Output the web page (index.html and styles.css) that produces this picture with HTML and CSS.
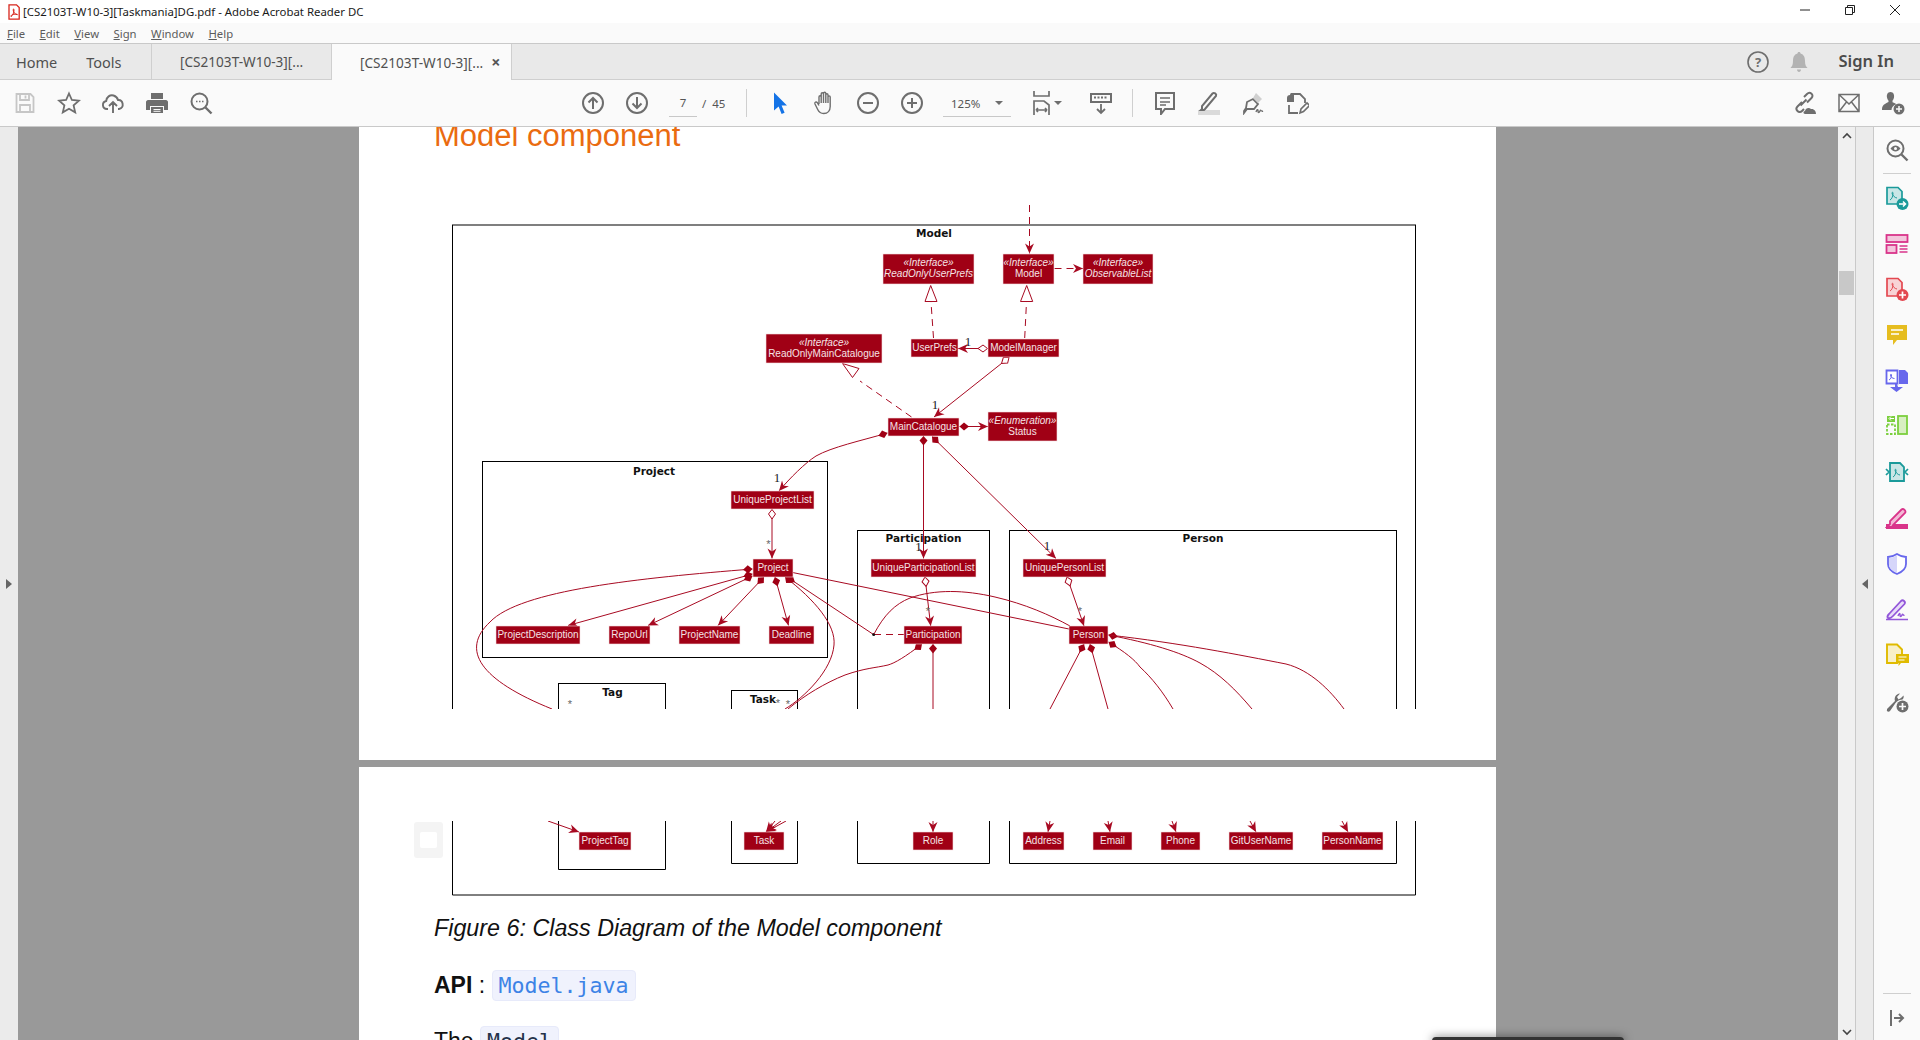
FILE: index.html
```html
<!DOCTYPE html>
<html lang="en">
<head>
  <meta charset="UTF-8">
  <title>[CS2103T-W10-3][Taskmania]DG.pdf - Adobe Acrobat Reader DC</title>
  <link rel="stylesheet" href="styles.css">
</head>
<body>
  <svg class="defs" width="0" height="0">
    <defs>
      <marker id="arrow" markerUnits="userSpaceOnUse" markerWidth="14" markerHeight="12" refX="11" refY="6" orient="auto">
        <path d="M1 1.500 L11 6 L1 10.500 L4 6 Z" fill="#a80a22"/>
      </marker>
      <marker id="dia" markerUnits="userSpaceOnUse" markerWidth="12" markerHeight="10" refX="1" refY="5" orient="auto">
        <path d="M1 5 L5.500 1 L10.500 5 L5.500 9 Z" fill="#a00015"/>
      </marker>
      <marker id="odia" markerUnits="userSpaceOnUse" markerWidth="12" markerHeight="10" refX="1" refY="5" orient="auto">
        <path d="M1 5 L5.500 1.500 L10.500 5 L5.500 8.500 Z" fill="#fff" stroke="#a80a22"/>
      </marker>
    </defs>
  </svg>

  <!-- window chrome -->
  <div class="titlebar">
    <svg class="pdf-icon" width="12" height="16" viewBox="0 0 12 16"><path d="M1 .8h7.500L11.200 3.500V15.200H1z" fill="#fff" stroke="#d8261c" stroke-width="1.300"/><path d="M3 12.600c1.600-1 3-3.600 3-6.600 0-1.400-.8-1.400-.8 0 0 2.400 2.200 4.600 4 4.700 1 0-.4-1-3.400-.4-1.500.3-3.600 1.300-2.800 2.300z" fill="none" stroke="#d8261c"/></svg>
    <span class="title-text">[CS2103T-W10-3][Taskmania]DG.pdf - Adobe Acrobat Reader DC</span>
    <div class="win-btns">
      <svg width="12" height="12" viewBox="0 0 12 12"><path d="M1 6h10" stroke="#222"/></svg>
      <svg width="12" height="12" viewBox="0 0 12 12"><path d="M1.500 3.500h7v7h-7zM3.500 3.500v-2h7v7h-2" fill="none" stroke="#222"/></svg>
      <svg width="12" height="12" viewBox="0 0 12 12"><path d="M1 1l10 10M11 1L1 11" stroke="#222"/></svg>
    </div>
  </div>

  <div class="menubar">
    <span><u>F</u>ile</span>
    <span><u>E</u>dit</span>
    <span><u>V</u>iew</span>
    <span><u>S</u>ign</span>
    <span><u>W</u>indow</span>
    <span><u>H</u>elp</span>
  </div>

  <div class="tabbar">
    <div class="nav-tabs">
      <span>Home</span>
      <span>Tools</span>
    </div>
    <div class="doc-tab">[CS2103T-W10-3][...</div>
    <div class="doc-tab active">[CS2103T-W10-3][... <span class="tab-close">×</span></div>
    <div class="tab-right">
      <svg width="24" height="24" viewBox="0 0 24 24"><circle cx="12" cy="12" r="10" fill="none" stroke="#6e6e6e" stroke-width="1.600"/><text x="12" y="16.500" class="help-q">?</text></svg>
      <svg width="24" height="24" viewBox="0 0 24 24"><path d="M12 2c1 0 1.500.7 1.500 1.500C17 4.500 18 7.500 18 11c0 4 1 5.500 2.500 7h-17C5 16.500 6 15 6 11c0-3.500 1-6.500 4.500-7.500C10.500 2.700 11 2 12 2zM10 19.500h4c0 1.500-1 2.500-2 2.500s-2-1-2-2.500z" fill="#b3b3b3"/></svg>
      <span class="sign-in">Sign In</span>
    </div>
  </div>

  <div class="toolbar">
    <div class="tb-group">
      <div class="tb-btn"><svg width="24" height="24" viewBox="0 0 24 24"><path d="M3.500 3h14l3 3v15h-17zM7 3v6h9V3M7 21v-7h10v7M12.500 4.500v3" fill="none" stroke="#c6c6c6" stroke-width="1.800"/></svg></div>
      <div class="tb-btn"><svg width="24" height="24" viewBox="0 0 24 24"><path d="M12 2.500l2.900 6.500 7 .7-5.300 4.700 1.600 7L12 17.800l-6.200 3.600 1.600-7L2.100 9.700l7-.7z" fill="none" stroke="#6e6e6e" stroke-width="1.800"/></svg></div>
      <div class="tb-btn"><svg width="24" height="24" viewBox="0 0 24 24"><path d="M7 18H6c-5 0-5.500-7-.8-8C5.500 6 9 3.500 12.500 4.500c2.500.7 4 2.500 4.500 4.500 5-.5 7 7.500 1 9h-1M12 22V11.500M8 15l4-4 4 4" fill="none" stroke="#6e6e6e" stroke-width="1.900"/></svg></div>
      <div class="tb-btn"><svg width="24" height="24" viewBox="0 0 24 24"><path d="M6 2h12v6H6zM3 9h18c1 0 2 1 2 2v8h-4v-4H5v4H1v-8c0-1 1-2 2-2zM6 16h12v6H6z" fill="#6e6e6e"/><path d="M8.500 18.500h7M8.500 20.300h7" stroke="#fafafa"/></svg></div>
      <div class="tb-btn"><svg width="24" height="24" viewBox="0 0 24 24"><circle cx="10.500" cy="10.500" r="8" fill="none" stroke="#6e6e6e" stroke-width="2"/><path d="M16.500 16.500l6 6" stroke="#6e6e6e" stroke-width="2.400"/><path d="M7 10.500h1.500M10 10.500h1.500M13 10.500h1.500" stroke="#6e6e6e" stroke-width="1.500"/></svg></div>
    </div>

    <div class="tb-group nav-group">
      <div class="tb-btn"><svg width="24" height="24" viewBox="0 0 24 24"><circle cx="12" cy="12" r="10" fill="none" stroke="#6e6e6e" stroke-width="2"/><path d="M12 18V7M7.500 11.500L12 7l4.500 4.500" fill="none" stroke="#6e6e6e" stroke-width="2"/></svg></div>
      <div class="tb-btn"><svg width="24" height="24" viewBox="0 0 24 24"><circle cx="12" cy="12" r="10" fill="none" stroke="#6e6e6e" stroke-width="2"/><path d="M12 6v11M7.500 12.500L12 17l4.500-4.500" fill="none" stroke="#6e6e6e" stroke-width="2"/></svg></div>
      <div class="page-num">7</div>
      <div class="page-total">/&nbsp; 45</div>
      <div class="tb-divider"></div>
      <div class="tb-btn"><svg width="24" height="24" viewBox="0 0 24 24"><path d="M6 1.500v18l4.600-4 3 7.500 3-1.200-3-7.300H19z" fill="#1473e6"/></svg></div>
      <div class="tb-btn"><svg width="24" height="24" viewBox="0 0 24 24"><path d="M7 13V6c0-1.600 2.200-1.600 2.200 0v-3c0-1.600 2.300-1.600 2.300 0v-.5c0-1.600 2.300-1.600 2.300 0V4c0-1.600 2.200-1.600 2.200 0v2c0-1.500 2.200-1.500 2.200 0v9.500c0 4-2.500 7-6.500 7-3 0-4.800-1.500-6-4L3 13c-.8-1.800 1.300-2.800 2.300-1.300L7 14.500M9.200 6v6M11.500 3v9M13.800 3v9M16 4v8" fill="none" stroke="#6e6e6e" stroke-width="1.400"/></svg></div>
      <div class="tb-btn"><svg width="24" height="24" viewBox="0 0 24 24"><circle cx="12" cy="12" r="10" fill="none" stroke="#6e6e6e" stroke-width="2"/><path d="M7 12h10" stroke="#6e6e6e" stroke-width="2"/></svg></div>
      <div class="tb-btn"><svg width="24" height="24" viewBox="0 0 24 24"><circle cx="12" cy="12" r="10" fill="none" stroke="#6e6e6e" stroke-width="2"/><path d="M7 12h10M12 7v10" stroke="#6e6e6e" stroke-width="2"/></svg></div>
      <div class="zoom-select"><span>125%</span><i class="caret"></i></div>
      <div class="tb-fit">
        <svg width="20" height="26" viewBox="0 0 20 26"><path d="M2 1v5h15V1M2 25V11h10l5 4v10M4 20h11M4 20l2-2M4 20l2 2M15 20l-2-2M15 20l-2 2" fill="none" stroke="#6e6e6e" stroke-width="1.700"/></svg>
        <i class="caret"></i>
      </div>
      <div class="tb-btn"><svg width="24" height="24" viewBox="0 0 24 24"><path d="M2 3h20v8H2z" fill="none" stroke="#6e6e6e" stroke-width="2"/><path d="M5 6.500h14" stroke="#6e6e6e" stroke-width="2" stroke-dasharray="2 1.500"/><path d="M12 13v9M8 18l4 4 4-4" fill="none" stroke="#6e6e6e" stroke-width="1.800"/></svg></div>
      <div class="tb-divider wide"></div>
      <div class="tb-btn"><svg width="24" height="24" viewBox="0 0 24 24"><path d="M3 2h18v16h-9l-4 5v-5H3z" fill="none" stroke="#6e6e6e" stroke-width="2"/><path d="M7 7h10M7 11h10M7 14h6" stroke="#6e6e6e" stroke-width="1.400"/></svg></div>
      <div class="tb-btn"><svg width="24" height="24" viewBox="0 0 24 24"><rect x="1" y="19" width="22" height="5" fill="#dadada"/><path d="M5 18l-1 1h3l1-1 11-13c1-2-2-4-3.500-2.500L5 15z" fill="none" stroke="#6e6e6e" stroke-width="2"/></svg></div>
      <div class="tb-btn"><svg width="24" height="24" viewBox="0 0 24 24"><path d="M12 8l5 5-4 5H6l-3 4 0-2 2-3 1-6z" fill="none" stroke="#6e6e6e" stroke-width="1.800"/><path d="M12 7l3-5 6 6-4 4z" fill="#d0d0d0"/><path d="M15 21c1-3 2-3 2-1s1 2 2 0 1 1 3 0" fill="none" stroke="#6e6e6e" stroke-width="1.400"/></svg></div>
      <div class="tb-btn"><svg width="24" height="24" viewBox="0 0 24 24"><path d="M2 7c0-2 1-3 3-3h4v7H2z" fill="#6e6e6e"/><path d="M6 2.500V3h9l5 5v4M4 14v8h9" fill="none" stroke="#6e6e6e" stroke-width="1.800"/><path d="M15 22l1-4 6-6 2.500 2.500-6 6z" fill="none" stroke="#6e6e6e" stroke-width="1.600"/></svg></div>
    </div>

    <div class="tb-group right-group">
      <div class="tb-btn"><svg width="24" height="24" viewBox="0 0 24 24"><path d="M9 11l-4.500 4.500c-3 3 1.500 7.500 4.500 4.500l2-2M7.500 14.500l6-6M11 6l3-3c3-3 7.500 1 4.500 4L14 11.500" fill="none" stroke="#6e6e6e" stroke-width="2"/><path d="M12 23c-2 0-2-3 0-3 .5-3 4-4 6-2 3-.5 5 2 5 5z" fill="#6e6e6e"/></svg></div>
      <div class="tb-btn"><svg width="24" height="24" viewBox="0 0 24 24"><path d="M2 3.500h20v17H2zM2.500 4L12 13l9.500-9M2.500 20l7-9M21.500 20l-7-9" fill="none" stroke="#6e6e6e" stroke-width="1.500"/></svg></div>
      <div class="tb-btn"><svg width="24" height="24" viewBox="0 0 24 24"><path d="M9.500 1c3 0 4 3 3.500 5.500-.3 1.500-1 2.500-1.500 3.200v1.500c2 .8 3 1.200 4 2-3 .8-5 3-5 5.800H1c0-3 .5-5.500 6.500-8V9.700C7 9 6.300 8 6 6.500 5.500 4 6.500 1 9.500 1z" fill="#6e6e6e"/><circle cx="18" cy="18" r="5.500" fill="#6e6e6e"/><path d="M15 18h6M18 15v6" stroke="#fafafa" stroke-width="1.500"/></svg></div>
    </div>
  </div>

  <!-- viewer -->
  <div class="viewer">
    <div class="side-strip"><i class="tri-right"></i></div>

    <div class="page-area">
      <div class="page first">
        <h2 class="heading">Model component</h2>
        <svg class="diagram" width="1008" height="529" viewBox="434 180 1008 529">
          <!-- frames -->
          <rect class="frame" x="452.500" y="225" width="963" height="700"/>
          <rect class="frame" x="482.500" y="461.500" width="345" height="196"/>
          <rect class="frame" x="857.500" y="530.500" width="132" height="300"/>
          <rect class="frame" x="1009.500" y="530.500" width="387" height="300"/>
          <rect class="frame" x="558.500" y="683.500" width="107" height="200"/>
          <rect class="frame" x="731.500" y="690.500" width="66" height="200"/>
          <text class="frame-t" x="934" y="237">Model</text>
          <text class="frame-t" x="654" y="474.500">Project</text>
          <text class="frame-t" x="923.500" y="542">Participation</text>
          <text class="frame-t" x="1203" y="542">Person</text>
          <text class="frame-t" x="612.500" y="695.500">Tag</text>
          <text class="frame-t" x="763" y="702.500">Task</text>

          <!-- links -->
          <path class="dash" d="M1029.500 205V253.500" marker-end="url(#arrow)"/>
          <path class="dash" d="M1054.500 268.500H1083" marker-end="url(#arrow)"/>
          <path class="dash" d="M933.500 338L931 302"/>
          <path class="tri" d="M930.700 285.500L937 301.500H925z"/>
          <path class="dash" d="M1024.700 338L1026.500 302"/>
          <path class="tri" d="M1026.700 285.500L1032.700 301.500H1020.500z"/>
          <path class="link" d="M987.500 348.500H958" marker-start="url(#odia)" marker-end="url(#arrow)"/>
          <path class="link" d="M1009 357.500L934 417" marker-start="url(#odia)" marker-end="url(#arrow)"/>
          <path class="dash" d="M911.500 417L860 381"/>
          <path class="tri" d="M842.500 363.500L859 368.500L852.500 377.500z"/>
          <path class="link" d="M959.500 426.500H988" marker-start="url(#dia)" marker-end="url(#arrow)"/>
          <path class="link" d="M887.500 433C860 441 832 447 816 456C805 463 790 478 779 491" marker-start="url(#dia)" marker-end="url(#arrow)"/>
          <path class="link" d="M923.500 436V558.500" marker-start="url(#dia)" marker-end="url(#arrow)"/>
          <path class="link" d="M932 436.500L1056 558.500" marker-start="url(#dia)" marker-end="url(#arrow)"/>
          <path class="link" d="M772 509.500V558.500" marker-start="url(#odia)" marker-end="url(#arrow)"/>
          <path class="link" d="M752.500 569C640 578 520 590 490 622C460 650 480 680 552 709" marker-start="url(#dia)"/>
          <path class="link" d="M752.500 574L568 625.500" marker-start="url(#dia)" marker-end="url(#arrow)"/>
          <path class="link" d="M752.500 576L648 625.500" marker-start="url(#dia)" marker-end="url(#arrow)"/>
          <path class="link" d="M764 577L718 625.500" marker-start="url(#dia)" marker-end="url(#arrow)"/>
          <path class="link" d="M775 577L788.500 625.500" marker-start="url(#dia)" marker-end="url(#arrow)"/>
          <path class="link" d="M792.500 572.500L1069 629"/>
          <path class="link" d="M785 577C815 600 836 625 834 645C832 670 805 697 785 709" marker-start="url(#dia)"/>
          <path class="link" d="M787 577L873.500 634.500" marker-start="url(#dia)"/>
          <path class="dash" d="M874 634.500H904"/>
          <circle cx="873.700" cy="634.500" r="1.500" fill="#111"/>
          <path class="link" d="M874 634C884 615 895 604 910 598C935 589 965 590 995 597C1025 604 1050 615 1070 626"/>
          <path class="link" d="M925 577L930.700 626" marker-start="url(#odia)" marker-end="url(#arrow)"/>
          <path class="link" d="M1067 577L1084 626" marker-start="url(#odia)" marker-end="url(#arrow)"/>
          <path class="link" d="M922 644C905 657 895 663 888 665C875 668 865 668 845 675C825 683 805 695 788 709" marker-start="url(#dia)"/>
          <path class="link" d="M933 644V709" marker-start="url(#dia)"/>
          <path class="link" d="M1084 644L1050 709" marker-start="url(#dia)"/>
          <path class="link" d="M1090 644L1108 709" marker-start="url(#dia)"/>
          <path class="link" d="M1108.500 642C1125 652 1135 660 1140 667C1152 678 1163 692 1173 709" marker-start="url(#dia)"/>
          <path class="link" d="M1108.500 635C1150 643 1180 652 1200 663C1220 674 1236 690 1252 709" marker-start="url(#dia)"/>
          <path class="link" d="M1108.500 635C1180 643 1240 655 1286 664C1310 670 1330 690 1344 709"/>

          <!-- multiplicity -->
          <text class="mult" x="968" y="346">1</text>
          <text class="mult" x="935" y="409">1</text>
          <text class="mult" x="777" y="482">1</text>
          <text class="mult" x="918.500" y="551">1</text>
          <text class="mult" x="1047" y="550">1</text>
          <text class="star" x="768.500" y="548">*</text>
          <text class="star" x="928" y="615">*</text>
          <text class="star" x="1080" y="615">*</text>
          <text class="star" x="570" y="708">*</text>
          <text class="star" x="778" y="707">*</text>
          <text class="star" x="788" y="708">*</text>

          <!-- classes -->
          <rect class="box" x="883" y="254" width="91" height="30"/>
          <text class="box-i" x="928.500" y="266">«Interface»</text>
          <text class="box-i" x="928.500" y="277">ReadOnlyUserPrefs</text>
          <rect class="box" x="1003" y="254" width="51" height="30"/>
          <text class="box-i" x="1028.500" y="266">«Interface»</text>
          <text class="box-t" x="1028.500" y="277">Model</text>
          <rect class="box" x="1083" y="254" width="70" height="30"/>
          <text class="box-i" x="1118" y="266">«Interface»</text>
          <text class="box-i" x="1118" y="277">ObservableList</text>
          <rect class="box" x="766" y="334" width="116" height="29"/>
          <text class="box-i" x="824" y="346">«Interface»</text>
          <text class="box-t" x="824" y="357">ReadOnlyMainCatalogue</text>
          <rect class="box" x="911" y="339" width="47" height="18"/>
          <text class="box-t" x="934.500" y="351">UserPrefs</text>
          <rect class="box" x="988" y="339" width="71" height="18"/>
          <text class="box-t" x="1023.500" y="351">ModelManager</text>
          <rect class="box" x="888" y="418" width="71" height="18"/>
          <text class="box-t" x="923.500" y="430">MainCatalogue</text>
          <rect class="box" x="988" y="412" width="69" height="29"/>
          <text class="box-i" x="1022.500" y="424">«Enumeration»</text>
          <text class="box-t" x="1022.500" y="435">Status</text>
          <rect class="box" x="731" y="491" width="83" height="18"/>
          <text class="box-t" x="772.500" y="503">UniqueProjectList</text>
          <rect class="box" x="753" y="559" width="40" height="18"/>
          <text class="box-t" x="773" y="571">Project</text>
          <rect class="box" x="871" y="559" width="105" height="18"/>
          <text class="box-t" x="923.500" y="571">UniqueParticipationList</text>
          <rect class="box" x="1023" y="559" width="83" height="18"/>
          <text class="box-t" x="1064.500" y="571">UniquePersonList</text>
          <rect class="box" x="496" y="626" width="84" height="18"/>
          <text class="box-t" x="538" y="638">ProjectDescription</text>
          <rect class="box" x="609" y="626" width="41" height="18"/>
          <text class="box-t" x="629.500" y="638">RepoUrl</text>
          <rect class="box" x="679" y="626" width="61" height="18"/>
          <text class="box-t" x="709.500" y="638">ProjectName</text>
          <rect class="box" x="769" y="626" width="45" height="18"/>
          <text class="box-t" x="791.500" y="638">Deadline</text>
          <rect class="box" x="904" y="626" width="58" height="18"/>
          <text class="box-t" x="933" y="638">Participation</text>
          <rect class="box" x="1069" y="626" width="39" height="18"/>
          <text class="box-t" x="1088.500" y="638">Person</text>
        </svg>
      </div>

      <div class="page second">
        <div class="copy-chip"><i></i></div>
        <svg class="diagram" width="1008" height="82" viewBox="434 821 1008 82">
          <path class="frame" d="M452.500 800V895H1415.500V800"/>
          <path class="frame" d="M558.500 800V869.500H665.500V800"/>
          <path class="frame" d="M731.500 800V863.500H797.500V800"/>
          <path class="frame" d="M857.500 800V863.500H989.500V800"/>
          <path class="frame" d="M1009.500 800V863.500H1396.500V800"/>
          <path class="link" d="M548 821L579 832" marker-end="url(#arrow)"/>
          <path class="link" d="M775 821L766 832" marker-end="url(#arrow)"/>
          <path class="link" d="M781 821L766 832" marker-end="url(#arrow)"/>
          <path class="link" d="M786 821L766 832" marker-end="url(#arrow)"/>
          <path class="link" d="M933 821V832" marker-end="url(#arrow)"/>
          <path class="link" d="M1050 821L1048 832" marker-end="url(#arrow)"/>
          <path class="link" d="M1108 821L1110 832" marker-end="url(#arrow)"/>
          <path class="link" d="M1172 821L1176 832" marker-end="url(#arrow)"/>
          <path class="link" d="M1250 821L1256 832" marker-end="url(#arrow)"/>
          <path class="link" d="M1342 821L1348 832" marker-end="url(#arrow)"/>
          <rect class="box" x="579" y="832" width="52" height="18"/>
          <text class="box-t" x="605" y="844">ProjectTag</text>
          <rect class="box" x="744" y="832" width="40" height="18"/>
          <text class="box-t" x="764" y="844">Task</text>
          <rect class="box" x="913" y="832" width="40" height="18"/>
          <text class="box-t" x="933" y="844">Role</text>
          <rect class="box" x="1023" y="832" width="41" height="18"/>
          <text class="box-t" x="1043.500" y="844">Address</text>
          <rect class="box" x="1093" y="832" width="39" height="18"/>
          <text class="box-t" x="1112.500" y="844">Email</text>
          <rect class="box" x="1161" y="832" width="39" height="18"/>
          <text class="box-t" x="1180.500" y="844">Phone</text>
          <rect class="box" x="1229" y="832" width="64" height="18"/>
          <text class="box-t" x="1261" y="844">GitUserName</text>
          <rect class="box" x="1322" y="832" width="61" height="18"/>
          <text class="box-t" x="1352.500" y="844">PersonName</text>
        </svg>
        <p class="caption">Figure 6: Class Diagram of the Model component</p>
        <p class="api-line"><strong>API</strong> : <code class="link-code">Model.java</code></p>
        <p class="body-line">The <code class="dark-code">Model</code></p>
      </div>
    </div>

    <div class="scrollbar">
      <svg width="12" height="8" viewBox="0 0 12 8"><path d="M2 6l4-4 4 4" fill="none" stroke="#444" stroke-width="1.600"/></svg>
      <div class="thumb"></div>
      <svg class="scroll-down" width="12" height="8" viewBox="0 0 12 8"><path d="M2 2l4 4 4-4" fill="none" stroke="#444" stroke-width="1.600"/></svg>
    </div>

    <div class="collapse-strip"><i class="tri-left"></i></div>

    <div class="tool-rail">
      <div class="rail-btn"><svg width="24" height="24" viewBox="0 0 24 24"><circle cx="10.500" cy="10.500" r="8" fill="none" stroke="#6e6e6e" stroke-width="2"/><path d="M16.500 16.500l6 6" stroke="#6e6e6e" stroke-width="2.400"/><path d="M5.500 10.500c3-4 7-4 10 0-3 4-7 4-10 0z" fill="#6e6e6e"/><circle cx="10.500" cy="10.500" r="1.500" fill="#fafafa"/></svg></div>
      <div class="rail-line top"></div>
      <div class="rail-btn"><svg width="24" height="24" viewBox="0 0 24 24"><path d="M2 1.500h11l4 4V18H2z" fill="#c9e6e6" stroke="#1a9a9a" stroke-width="1.700"/><path d="M5 14c2-1 3-4 3-7 0-1-1-1-1 0 0 2 3 5 5 5" fill="none" stroke="#1a9a9a"/><circle cx="17.500" cy="18" r="6" fill="#1a9a9a"/><path d="M14 18h6M18 15.500l2.500 2.500-2.500 2.500" fill="none" stroke="#fff" stroke-width="1.500"/></svg></div>
      <div class="rail-btn"><svg width="24" height="24" viewBox="0 0 24 24"><rect x="1.500" y="3" width="21" height="7" fill="#f3c6dc" stroke="#d9348a" stroke-width="1.800"/><rect x="1.500" y="13" width="10" height="8" fill="#f3c6dc" stroke="#d9348a" stroke-width="1.800"/><path d="M14.500 14h8M14.500 17h8M14.500 20h8" stroke="#d9348a" stroke-width="1.300"/></svg></div>
      <div class="rail-btn"><svg width="24" height="24" viewBox="0 0 24 24"><path d="M2 1.500h11l4 4V19H2z" fill="#f8d3d6" stroke="#e34850" stroke-width="1.700"/><path d="M5 14c2-1 3-4 3-7 0-1-1-1-1 0 0 2 3 5 5 5" fill="none" stroke="#e34850"/><circle cx="17.500" cy="18" r="6" fill="#e34850"/><path d="M14 18h7M17.500 14.500v7" stroke="#fff" stroke-width="1.700"/></svg></div>
      <div class="rail-btn"><svg width="24" height="24" viewBox="0 0 24 24"><path d="M2 2h20v15H12l-4 5v-5H2z" fill="#e6bd1f"/><path d="M6 7h12M6 11h8" stroke="#fff" stroke-width="1.600"/></svg></div>
      <div class="rail-btn"><svg width="24" height="24" viewBox="0 0 24 24"><path d="M1.500 1.500h11v13h-11z" fill="#fff" stroke="#6767ec" stroke-width="1.800"/><path d="M4 11c2-1 2.500-3 2.500-5 0-1-1-1-1 0 0 2 2 3.500 4 3.500" fill="none" stroke="#6767ec"/><path d="M14 1h6l3 3v11H14z" fill="#6767ec"/><path d="M12 15h-2v3H5l6.500 5 6.500-5h-5z" fill="#6767ec"/></svg></div>
      <div class="rail-btn"><svg width="24" height="24" viewBox="0 0 24 24"><rect x="13" y="2" width="9" height="18" fill="#d8efc2" stroke="#7ccf3e" stroke-width="1.800"/><path d="M2 10.500h8v9.500H2z" fill="none" stroke="#7ccf3e" stroke-width="1.800" stroke-dasharray="2.500 1.500"/><path d="M2 2l8 0v6H2z" fill="#7ccf3e"/><path d="M9 4.500H5M6 2.500L4 4.500l2 2" fill="none" stroke="#fff"/></svg></div>
      <div class="rail-btn"><svg width="24" height="24" viewBox="0 0 24 24"><path d="M5 3h10l4 4v14H5z" fill="#c9e6e6" stroke="#1a9a9a" stroke-width="1.800"/><path d="M8 17c2-1 3-4 3-7 0-1-1-1-1 0 0 2 3 5 5 5" fill="none" stroke="#1a9a9a"/><path d="M1 9l3 3-3 3M23 9l-3 3 3 3" fill="none" stroke="#1a9a9a" stroke-width="1.700"/></svg></div>
      <div class="rail-btn"><svg width="24" height="24" viewBox="0 0 24 24"><rect x="1" y="18" width="22" height="5" fill="#d9348a"/><path d="M5 18l-3 3h5l1-2 12-12c1.500-2-1.500-5-3.500-3.500L5 15z" fill="#f3b9d6" stroke="#d9348a" stroke-width="1.800"/></svg></div>
      <div class="rail-btn"><svg width="24" height="24" viewBox="0 0 24 24"><path d="M12 2c3 2 6 3 9 3v7c0 5-4 8-9 10-5-2-9-5-9-10V5c3 0 6-1 9-3z" fill="#fff" stroke="#6767ec" stroke-width="1.800"/><path d="M12 3v18c-5-2-8-5-8-9V6c3 0 5-1 8-3z" fill="#d6d6fa"/></svg></div>
      <div class="rail-btn"><svg width="24" height="24" viewBox="0 0 24 24"><path d="M3 21c-1-1 0-3 1-4L16 4c2-2 5 1 3.500 3L8 19c-1 1-3 3-5 2z" fill="#e8dcf8" stroke="#9256d9" stroke-width="1.800"/><path d="M1 22.500h22M13 19c1-3 2-3 2-1s1 2 2 0 1 1 2.500 0" fill="none" stroke="#9256d9" stroke-width="1.500"/></svg></div>
      <div class="rail-btn"><svg width="24" height="24" viewBox="0 0 24 24"><path d="M2 1.500h10l5 5V13h-5v7H2z" fill="#f8f0c8" stroke="#e0bb00" stroke-width="1.900"/><path d="M11 11h13v9h-8l-2.500 3v-3H11z" fill="#e0bb00"/><path d="M13.500 14h8M13.500 17h6" stroke="#fff"/></svg></div>
      <div class="rail-btn"><svg width="24" height="24" viewBox="0 0 24 24"><path d="M2 20l8-8c-1-3 .5-7 5-7.500L12 8l1.500 2.500L16 9l2.500-2.500c.5 1.500 0 3-1 4-4 0-7 3-8 5l-4.500 6.500c-1.500 1.500-4 0-3-1z" fill="#6e6e6e"/><circle cx="17.500" cy="17.500" r="6" fill="#6e6e6e"/><path d="M14 17.500h7M17.500 14v7" stroke="#fafafa" stroke-width="1.700"/></svg></div>
      <div class="rail-foot">
        <div class="rail-line"></div>
        <svg width="16" height="18" viewBox="0 0 16 18"><path d="M2 1v16" stroke="#6e6e6e" stroke-width="2"/><path d="M5 9h9M10 5l4 4-4 4" fill="none" stroke="#6e6e6e" stroke-width="2"/></svg>
      </div>
    </div>

    <div class="dark-popup"></div>
  </div>
</body>
</html>
```

FILE: styles.css
```css
html, body {
  margin: 0;
  height: 100%;
  overflow: hidden;
}
body {
  display: flex;
  flex-direction: column;
  font-family: "Noto Sans", sans-serif;
  background-color: #fff;
  color: #4b4b4b;
}
.defs {
  position: absolute;
}

/* Title bar */
.titlebar {
  height: 23px;
  display: flex;
  align-items: center;
  padding-left: 8px;
  gap: 3px;
  background-color: #fff;
  font-size: 11.400px;
  color: #1a1a1a;
  flex: none;
}
.pdf-icon {
  flex: none;
}
.win-btns {
  margin-left: auto;
  display: flex;
  gap: 33px;
  padding-right: 19px;
  padding-bottom: 4px;
}

/* Menu */
.menubar {
  height: 20px;
  display: flex;
  align-items: center;
  gap: 14.500px;
  padding-left: 7px;
  background-color: #fafafa;
  font-size: 11.300px;
  color: #5c5c5c;
  flex: none;
}

/* Tabs */
.tabbar {
  height: 35px;
  display: flex;
  background-color: #e9e9e9;
  border-top: 1px solid #c9c9c9;
  border-bottom: 1px solid #cfcfcf;
  flex: none;
}
.nav-tabs {
  width: 135px;
  padding-left: 16px;
  display: flex;
  align-items: center;
  gap: 29px;
  font-size: 14.500px;
  color: #505050;
  border-right: 1px solid #cfcfcf;
}
.doc-tab {
  width: 151px;
  padding-left: 28px;
  display: flex;
  align-items: center;
  font-size: 13.600px;
  color: #505050;
}
.doc-tab.active {
  background-color: #fafafa;
  border-left: 1px solid #cfcfcf;
  border-right: 1px solid #cfcfcf;
  margin-bottom: -1px;
  gap: 8px;
}
.tab-close {
  font-size: 16px;
  font-weight: 700;
  color: #555;
}
.tab-right {
  margin-left: auto;
  display: flex;
  align-items: center;
  padding-right: 26px;
}
.tab-right svg {
  margin-right: 17px;
}
.help-q {
  font-size: 13px;
  font-weight: 700;
  text-anchor: middle;
  fill: #6e6e6e;
}
.sign-in {
  margin-left: 10px;
  font-size: 16.500px;
  font-weight: 600;
  color: #4b4b4b;
  margin-top: -2px;
}

/* Toolbar */
.toolbar {
  height: 46px;
  display: flex;
  align-items: center;
  padding-left: 3px;
  padding-right: 5px;
  background-color: #fafafa;
  border-bottom: 1px solid #c9c9c9;
  flex: none;
}
.tb-group {
  display: flex;
  align-items: center;
}
.nav-group {
  margin-left: 348px;
}
.right-group {
  margin-left: auto;
}
.tb-btn {
  width: 44px;
  height: 44px;
  display: flex;
  align-items: center;
  justify-content: center;
}
.page-num {
  width: 28px;
  margin-left: 10px;
  height: 26px;
  line-height: 26px;
  text-align: center;
  font-size: 11.500px;
  color: #555;
  border-bottom: 1px solid #c8c8c8;
  margin-top: 1px;
}
.page-total {
  width: 49px;
  padding-left: 5px;
  box-sizing: border-box;
  font-size: 11.500px;
  color: #555;
}
.tb-divider {
  width: 1px;
  height: 28px;
  background-color: #cfcfcf;
  margin-right: 11px;
}
.tb-divider.wide {
  margin-left: 9px;
  margin-right: 10px;
}
.zoom-select {
  width: 68px;
  height: 26px;
  margin-left: 9px;
  margin-top: 1px;
  display: flex;
  align-items: center;
  box-sizing: border-box;
  padding-left: 8px;
  font-size: 11.500px;
  color: #555;
  border-bottom: 1px solid #c8c8c8;
}
.zoom-select .caret {
  margin-left: 15px;
}
.caret {
  width: 0;
  height: 0;
  border-left: 4px solid transparent;
  border-right: 4px solid transparent;
  border-top: 4px solid #6e6e6e;
}
.tb-fit {
  width: 47px;
  margin-left: 21px;
  display: flex;
  align-items: center;
  gap: 2px;
}

/* Viewer */
.viewer {
  position: relative;
  flex: 1;
  min-height: 0;
  display: flex;
}
.side-strip {
  width: 18px;
  background-color: #ebebeb;
  display: flex;
  align-items: center;
  justify-content: center;
  flex: none;
}
.tri-right {
  width: 0;
  height: 0;
  border-top: 5px solid transparent;
  border-bottom: 5px solid transparent;
  border-left: 6px solid #666;
}
.tri-left {
  width: 0;
  height: 0;
  border-top: 5px solid transparent;
  border-bottom: 5px solid transparent;
  border-right: 6px solid #666;
}
.page-area {
  flex: 1;
  min-width: 0;
  background-color: #999;
  overflow: hidden;
  padding-left: 341px;
  box-sizing: border-box;
}
.page {
  width: 1137px;
  box-sizing: border-box;
  padding-left: 75px;
  background-color: #fff;
  overflow: hidden;
  position: relative;
}
.page.first {
  height: 633px;
  margin-bottom: 7px;
}
.page.second {
  height: 280px;
  padding-top: 54px;
  color: #111;
}
.heading {
  margin: -9px 0 26px;
  font: 400 31px/36px "Liberation Sans", sans-serif;
  color: #ea6b10;
}
.diagram {
  display: block;
}
.copy-chip {
  position: absolute;
  left: 55px;
  top: 55px;
  width: 29px;
  height: 36px;
  background-color: #f4f4f4;
  border-radius: 3px;
  display: flex;
  align-items: center;
  justify-content: center;
}
.copy-chip i {
  width: 17px;
  height: 16px;
  background-color: #fff;
  border-radius: 2px;
}

/* Diagram */
.frame {
  fill: none;
  stroke: #000;
  stroke-width: 1;
}
.frame-t {
  font: 700 10.500px "DejaVu Sans", sans-serif;
  text-anchor: middle;
  fill: #111;
}
.box {
  fill: #a00015;
  stroke: #f3dde0;
  stroke-width: .6;
}
.box-t, .box-i {
  font: 400 10px "Liberation Sans", sans-serif;
  text-anchor: middle;
  fill: #f5e3e5;
}
.box-i {
  font-style: italic;
}
.link {
  fill: none;
  stroke: #a80a22;
  stroke-width: 1;
}
.dash {
  fill: none;
  stroke: #a80a22;
  stroke-width: 1;
  stroke-dasharray: 7 5;
}
.tri {
  fill: #fff;
  stroke: #a80a22;
  stroke-width: 1;
}
.mult {
  font: 400 13px "Liberation Serif", serif;
  text-anchor: middle;
  fill: #222;
}
.star {
  font: 400 11px "Liberation Sans", sans-serif;
  text-anchor: middle;
  fill: #666;
}

/* Text under the diagram */
.caption {
  margin: 10px 0 0;
  font: italic 400 23.300px/30px "Liberation Sans", sans-serif;
}
.api-line {
  margin: 26px 0 0;
  font: 400 23px/32px "Liberation Sans", sans-serif;
}
.body-line {
  margin: 24px 0 0;
  font: 400 23px/32px "Liberation Sans", sans-serif;
}
code {
  display: inline-block;
  font-family: "DejaVu Sans Mono", monospace;
  font-size: 21.600px;
  line-height: 29px;
  padding: 0 6px;
  background-color: #f0f2fd;
  border: 1px solid #e7eafa;
  border-radius: 4px;
}
.link-code {
  color: #3d83e6;
}
.dark-code {
  color: #24324a;
}

/* Scrollbar and side panels */
.scrollbar {
  width: 17px;
  position: relative;
  background-color: #f0f0f0;
  border-right: 1px solid #c9c9c9;
  display: flex;
  flex-direction: column;
  align-items: center;
  padding-top: 5px;
  box-sizing: content-box;
  flex: none;
}
.thumb {
  width: 15px;
  height: 24px;
  margin-top: 131px;
  background-color: #c8c8c8;
}
.scroll-down {
  margin-top: auto;
  margin-bottom: 4px;
}
.collapse-strip {
  width: 17px;
  background-color: #ebebeb;
  border-right: 1px solid #c9c9c9;
  display: flex;
  align-items: center;
  justify-content: center;
  flex: none;
}
.tool-rail {
  width: 46px;
  background-color: #fafafa;
  display: flex;
  flex-direction: column;
  align-items: center;
  flex: none;
}
.rail-btn {
  height: 45.700px;
  display: flex;
  align-items: center;
  justify-content: center;
  flex: none;
}
.rail-line {
  width: 28px;
  height: 1px;
  background-color: #cfcfcf;
  flex: none;
}
.rail-line.top {
  margin-bottom: 1.500px;
}
.rail-foot {
  margin-top: auto;
  height: 47px;
  display: flex;
  flex-direction: column;
  align-items: center;
  gap: 15px;
}
.dark-popup {
  position: absolute;
  left: 1432px;
  top: 910px;
  width: 192px;
  height: 6px;
  background-color: #333;
  border-radius: 4px 4px 0 0;
  box-shadow: 0 0 10px rgba(0, 0, 0, .55);
}
```
